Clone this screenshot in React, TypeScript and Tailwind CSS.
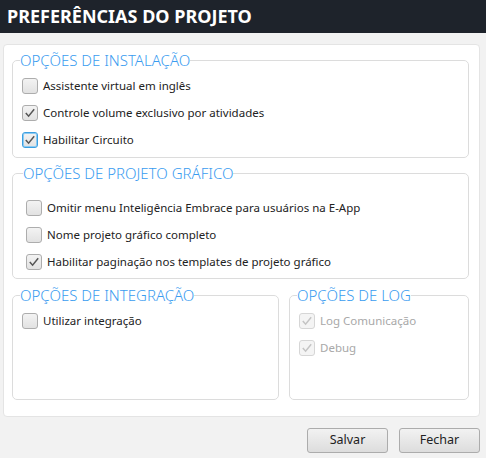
import React from "react";

type Opt = { label: string; checked?: boolean; focused?: boolean; disabled?: boolean };

const Check = ({ checked, focused, disabled }: Opt) => {
  const border = focused
    ? "border-[#3c9fe0] shadow-[inset_0_0_0_1px_#8ccbf3]"
    : disabled
    ? "border-[#d6d6d6]"
    : "border-[#adadad]";
  const bg = disabled
    ? "bg-[#f4f4f4]"
    : "bg-gradient-to-b from-[#f3f3f3] to-[#e2e2e2]";
  return (
    <span
      className={`flex h-4 w-4 shrink-0 items-center justify-center rounded-[3px] border ${border} ${bg}`}
    >
      {checked && (
        <svg width="12" height="12" viewBox="0 0 12 12">
          <path
            d="M1.8 6 L4.6 9.2 L10.2 2.2"
            fill="none"
            stroke={disabled ? "#c4c4c4" : "#555"}
            strokeWidth="1.5"
          />
        </svg>
      )}
    </span>
  );
};

const Row = (o: Opt) => (
  <div className="flex h-[27px] items-center gap-[5px]">
    <Check {...o} />
    <span className={o.disabled ? "text-[#a8a8a8]" : "text-[#222]"}>{o.label}</span>
  </div>
);

const Group = ({
  title,
  children,
  className = "",
  inset = "ml-[7px]",
  content = "",
}: {
  title: string;
  children: React.ReactNode;
  className?: string;
  inset?: string;
  content?: string;
}) => (
  <fieldset className={`rounded-[5px] border border-[#dcdcdc] ${className}`}>
    <legend className={`${inset} text-[15px] leading-5 font-light text-[#3a9cf0]`}>
      {title}
    </legend>
    <div className={content}>{children}</div>
  </fieldset>
);

export default function App() {
  return (
    <div
      className="h-[458px] w-[486px] bg-[#f2f2f2] text-[11.5px]"
      style={{ fontFamily: '"Noto Sans", "Open Sans", sans-serif' }}
    >
      <div className="flex h-[33px] items-center bg-[#1e232b] px-[7px] text-[18px] font-bold text-white">
        PREFERÊNCIAS DO PROJETO
      </div>
      <div className="ml-[3px] mr-[6px] mt-[11px] flex h-[373px] flex-col gap-[5px] rounded-[4px] border border-[#e4e4e4] bg-white pl-[8px] pr-[10px] pt-[5px]">
        <Group title="OPÇÕES DE INSTALAÇÃO" content="pl-[9px] pt-[2px] pb-[4px]">
          <Row label="Assistente virtual em inglês" />
          <Row label="Controle volume exclusivo por atividades" checked />
          <Row label="Habilitar Circuito" checked focused />
        </Group>
        <Group
          title="OPÇÕES DE PROJETO GRÁFICO"
          inset="ml-[10px]"
          content="pl-[13px] pt-[11px] pb-[3px]"
        >
          <Row label="Omitir menu Inteligência Embrace para usuários na E-App" />
          <Row label="Nome projeto gráfico completo" />
          <Row label="Habilitar paginação nos templates de projeto gráfico" checked />
        </Group>
        <div className="mt-px flex gap-[10px]">
          <Group
            title="OPÇÕES DE INTEGRAÇÃO"
            className="h-[115px] w-[267px]"
            content="pl-[9px] pt-[2px]"
          >
            <Row label="Utilizar integração" />
          </Group>
          <Group
            title="OPÇÕES DE LOG"
            className="h-[115px] flex-1"
            content="pl-[9px] pt-[2px]"
          >
            <Row label="Log Comunicação" checked disabled />
            <Row label="Debug" checked disabled />
          </Group>
        </div>
      </div>
      <div className="mr-[6px] mt-[11px] flex justify-end gap-[11px]">
        {["Salvar", "Fechar"].map((b) => (
          <button
            key={b}
            className="h-[25px] w-[81px] rounded-[3px] border border-[#acacac] bg-gradient-to-b from-[#f2f2f2] to-[#dddddd] text-[12.5px] text-[#222]"
          >
            {b}
          </button>
        ))}
      </div>
    </div>
  );
}
